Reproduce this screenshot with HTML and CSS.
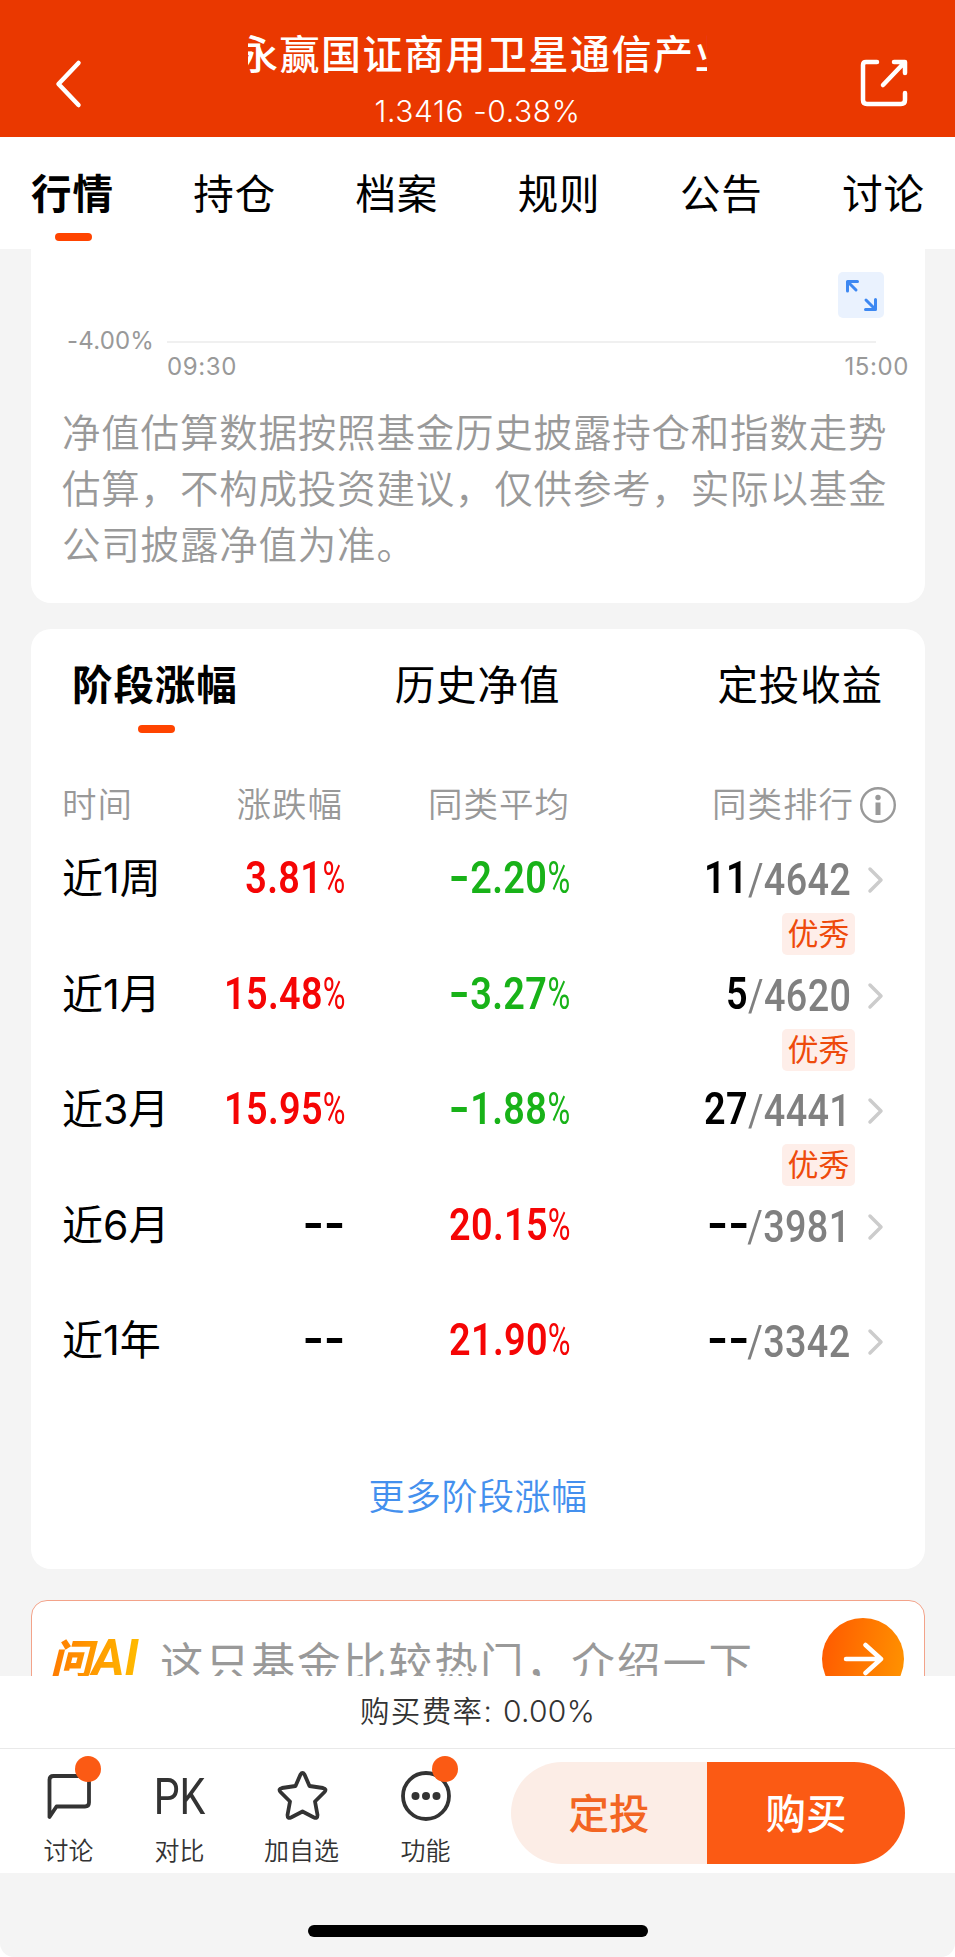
FILE: index.html
```html
<!DOCTYPE html>
<html lang="zh-CN">

<head>
    <meta charset="UTF-8">
    <meta name="viewport" content="width=device-width, initial-scale=1.0">
    <title>永赢国证商用卫星通信产业</title>
    <link rel="stylesheet" href="styles.css">
</head>

<body>
    <header class="header">
        <svg class="back" width="30" height="54" viewBox="0 0 30 54">
            <path d="M25.500 7 L5.500 28 L25.500 49" />
        </svg>
        <div class="fund">
            <h1><span>永赢国证商用卫星通信产业</span></h1>
            <p>1.3416 -0.38%</p>
        </div>
        <svg class="share" width="54" height="54" viewBox="0 0 54 54">
            <path d="M19 6 H8 Q5 6 5 9 V44 Q5 48 9 48 H43 Q47 48 47 44 V37" />
            <path d="M25 29 L46 7 M36 6 H47 V17" />
        </svg>
    </header>

    <nav class="tabs">
        <a class="active">行情</a>
        <a>持仓</a>
        <a>档案</a>
        <a>规则</a>
        <a>公告</a>
        <a>讨论</a>
    </nav>

    <main>
        <section class="card estimate">
            <div class="expand">
                <svg width="46" height="46" viewBox="0 0 46 46">
                    <path d="M9.500 19 V9.500 H19.500 M10 10 L18 18" />
                    <path d="M27.500 37.500 H37.500 V27.500 M28 28 L37 37" />
                </svg>
            </div>
            <div class="axis">
                <span>-4.00%</span>
                <i></i>
            </div>
            <div class="times">
                <span>09:30</span>
                <span>15:00</span>
            </div>
            <p class="notice">净值估算数据按照基金历史披露持仓和指数走势估算，不构成投资建议，仅供参考，实际以基金公司披露净值为准。</p>
        </section>

        <section class="card stage">
            <div class="stage-tabs">
                <a class="active">阶段涨幅</a>
                <a>历史净值</a>
                <a>定投收益</a>
            </div>
            <div class="row head">
                <span>时间</span>
                <span class="change">涨跌幅</span>
                <span class="average">同类平均</span>
                <span class="rank">同类排行<svg width="38" height="38" viewBox="0 0 38 38">
                        <circle cx="19" cy="19" r="16.800" />
                        <path d="M19 16.500 V29" />
                        <circle class="dot" cx="19" cy="11.500" r="2.700" />
                    </svg></span>
            </div>
            <div class="row">
                <span class="period">近<b>1</b>周</span>
                <span class="change num red">3.81<i>%</i></span>
                <span class="average num green"><u></u>2.20<i>%</i></span>
                <span class="rank"><span class="num">11<small><em>/</em>4642</small></span><svg width="20" height="30" viewBox="0 0 20 30"><path d="M5 4 L16 15 L5 26" /></svg></span>
                <span class="tag">优秀</span>
            </div>
            <div class="row">
                <span class="period">近<b>1</b>月</span>
                <span class="change num red">15.48<i>%</i></span>
                <span class="average num green"><u></u>3.27<i>%</i></span>
                <span class="rank"><span class="num">5<small><em>/</em>4620</small></span><svg width="20" height="30" viewBox="0 0 20 30"><path d="M5 4 L16 15 L5 26" /></svg></span>
                <span class="tag">优秀</span>
            </div>
            <div class="row">
                <span class="period">近3月</span>
                <span class="change num red">15.95<i>%</i></span>
                <span class="average num green"><u></u>1.88<i>%</i></span>
                <span class="rank"><span class="num">27<small><em>/</em>4441</small></span><svg width="20" height="30" viewBox="0 0 20 30"><path d="M5 4 L16 15 L5 26" /></svg></span>
                <span class="tag">优秀</span>
            </div>
            <div class="row">
                <span class="period">近6月</span>
                <span class="change num"><u></u><u></u></span>
                <span class="average num red">20.15<i>%</i></span>
                <span class="rank"><span class="num"><u></u><u></u><small><em>/</em>3981</small></span><svg width="20" height="30" viewBox="0 0 20 30"><path d="M5 4 L16 15 L5 26" /></svg></span>
            </div>
            <div class="row">
                <span class="period">近<b>1</b>年</span>
                <span class="change num"><u></u><u></u></span>
                <span class="average num red">21.90<i>%</i></span>
                <span class="rank"><span class="num"><u></u><u></u><small><em>/</em>3342</small></span><svg width="20" height="30" viewBox="0 0 20 30"><path d="M5 4 L16 15 L5 26" /></svg></span>
            </div>
            <a class="more">更多阶段涨幅</a>
        </section>

        <section class="ask">
            <span class="logo">问<b>AI</b></span>
            <span class="question">这只基金比较热门，介绍一下</span>
            <span class="go">
                <svg width="82" height="82" viewBox="0 0 82 82">
                    <path d="M24 41 H59 M43.500 27 L59 41 L43.500 55" />
                </svg>
            </span>
        </section>
    </main>

    <footer>
        <div class="fee">购买费率: <span>0.00%</span></div>
        <div class="bar">
            <a class="item">
                <svg width="56" height="56" viewBox="0 0 56 56">
                    <path d="M8.500 49 V12 Q8.500 8 12.500 8 H44 Q48 8 48 12 V34.500 Q48 38.500 44 38.500 H15.500 Z" />
                </svg>
                <span class="badge"></span>
                讨论
            </a>
            <a class="item">
                <span class="pk">PK</span>
                对比
            </a>
            <a class="item">
                <svg width="56" height="56" viewBox="0 0 56 56">
                    <path d="M26.500 6.500 Q28.500 3.500 30.500 6.500 L35.500 18 L49 20 Q53 21 50.500 24 L41 33.500 L43.500 47 Q43.500 51 40 49.500 L28.500 43.500 L17 49.500 Q13.500 51 13.500 47 L16 33.500 L6.500 24 Q4 21 8 20 L21.500 18 Z" />
                </svg>
                加自选
            </a>
            <a class="item">
                <svg width="56" height="56" viewBox="0 0 56 56">
                    <circle cx="28" cy="28" r="23" />
                    <circle class="dot" cx="17.500" cy="28" r="4" />
                    <circle class="dot" cx="28" cy="28" r="4" />
                    <circle class="dot" cx="38.500" cy="28" r="4" />
                </svg>
                <span class="badge"></span>
                功能
            </a>
            <div class="buttons">
                <button class="plan">定投</button>
                <button class="buy">购买</button>
            </div>
        </div>
    </footer>
    <div class="home"><i></i></div>
</body>

</html>
```

FILE: styles.css
```css
* {
    box-sizing: border-box;
}

body {
    font-family: Inter, "Noto Sans CJK SC", sans-serif;
    margin: 0;
    background-color: #fff;
    color: #000;
    width: 955px;
    height: 1957px;
    display: flex;
    flex-direction: column;
    overflow: hidden;
}

h1,
p {
    margin: 0;
    font-weight: normal;
}

svg {
    display: block;
    flex: none;
    fill: none;
    stroke-linecap: round;
    stroke-linejoin: round;
}

i,
em {
    font-style: normal;
}

/* header */
.header {
    height: 137px;
    flex: none;
    background-color: #ea3800;
    color: #fff;
    display: flex;
    padding-left: 53px;
}

.header svg {
    stroke: #fff;
    stroke-width: 4.5;
    margin-top: 56px;
}

.fund {
    width: 459px;
    margin: 27px 151px 0 165px;
    text-align: center;
}

.fund h1 {
    font-size: 40px;
    line-height: 56px;
    font-weight: 500;
    letter-spacing: 1.5px;
    overflow: hidden;
    display: flex;
    white-space: nowrap;
}

.fund h1 span {
    margin-left: -10px;
}

.fund p {
    font-size: 30px;
    line-height: 40px;
    margin-top: 8px;
    font-weight: 350;
    letter-spacing: 0.6px;
}

/* tabs */
.tabs {
    height: 112px;
    flex: none;
    display: flex;
    justify-content: space-between;
    padding: 0 30px 0 31px;
    font-size: 40.5px;
    line-height: 115px;
    letter-spacing: 0.9px;
}

.tabs a,
.stage-tabs a {
    position: relative;
    font-weight: 400;
}

.tabs .active,
.stage-tabs .active {
    font-weight: 600;
}

.active::after {
    content: "";
    position: absolute;
    left: 50%;
    margin-left: -17px;
    top: 96px;
    width: 37px;
    height: 8px;
    border-radius: 4px;
    background-color: #ff4400;
}

/* cards */
main {
    height: 1427px;
    flex: none;
    background-color: #f4f4f4;
    padding: 0 30px 0 31px;
    overflow: hidden;
}

.card {
    background-color: #fff;
    border-radius: 20px;
}

.estimate {
    height: 354px;
    border-radius: 0 0 20px 20px;
    padding: 23px 16px 0 31px;
    color: #999;
}

.expand {
    width: 46px;
    height: 46px;
    margin-left: 776px;
    border-radius: 5px;
    background-color: #eaf2fe;
}

.expand svg {
    stroke: #3d88f2;
    stroke-width: 3;
}

.axis {
    display: flex;
    align-items: center;
    height: 30px;
    margin-top: 7px;
    font-size: 24px;
    letter-spacing: 0.2px;
}

.axis span {
    width: 105px;
    padding-left: 5px;
}

.axis i {
    width: 709px;
    height: 2px;
    margin-top: 4px;
    background-color: #f0f0f0;
}

.times {
    display: flex;
    justify-content: space-between;
    padding-left: 105px;
    font-size: 24px;
    line-height: 24px;
    letter-spacing: 0.6px;
}

.notice {
    margin-top: 26px;
    width: 828px;
    font-size: 38.5px;
    line-height: 56px;
    letter-spacing: 0.8px;
    font-weight: 350;
}

.stage {
    margin-top: 26px;
    height: 940px;
}

.stage-tabs {
    display: flex;
    justify-content: space-between;
    height: 112px;
    padding: 0 42px 0 41px;
    font-size: 40.5px;
    line-height: 114px;
    letter-spacing: 0.9px;
}

.row {
    display: grid;
    grid-template-columns: 150px 131px 225px 1fr;
    grid-template-rows: 70px 45.6px;
    padding: 0 31px;
    height: 115.6px;
}

.head {
    height: 60px;
    margin-top: 34px;
    grid-template-rows: 60px;
    font-size: 34.5px;
    line-height: 60px;
    letter-spacing: 1px;
    color: #999;
    font-weight: 350;
}

.head + .row {
    margin-top: 8px;
}

.change,
.average {
    justify-self: end;
    margin-right: 0;
}

.head .average {
    margin-right: -2px;
}

.head .rank {
    display: flex;
    justify-content: flex-end;
    align-items: center;
    margin-right: -3px;
}

.head svg {
    margin-left: 5px;
    stroke: #999;
    stroke-width: 2.4;
}

.head path {
    stroke-width: 5;
    stroke-linecap: butt;
}

.head .dot {
    fill: #999;
    stroke: none;
}

.period {
    font-size: 41px;
    line-height: 70px;
    font-weight: 400;
    white-space: nowrap;
}

.period b {
    font-weight: 400;
}

/* narrow figures */
.num {
    font-family: Roboto, sans-serif;
    font-size: 44.5px;
    line-height: 70px;
    font-weight: 600;
    white-space: nowrap;
    letter-spacing: 0.4px;
    transform: scaleX(0.85);
    transform-origin: right;
}

.num i {
    font-weight: 400;
    display: inline-block;
    width: 24px;
    letter-spacing: 0;
    transform: scaleX(0.82);
    transform-origin: left;
}

.num u {
    display: inline-block;
    width: 18px;
    height: 5px;
    margin: 0 1px 12px 6px;
    background-color: currentColor;
    vertical-align: baseline;
}

.green u {
    margin-right: 4px;
}

.num small {
    font-size: 44.5px;
    font-weight: 500;
    color: #808080;
    position: relative;
    top: 2px;
}

.num em {
    font-weight: 400;
}

.red {
    color: #f50505;
}

.green {
    color: #18b218;
}

.row .rank {
    display: flex;
    align-items: center;
    justify-content: flex-end;
}

.row:not(.head) .rank {
    margin-right: 9px;
}

.row:not(.head) .rank svg {
    margin: 4px 0 0 14px;
    stroke: #ccc;
    stroke-width: 3.5;
}

.tag {
    grid-column: 4;
    justify-self: end;
    width: 73px;
    height: 42px;
    margin: 0 39px 0 0;
    border-radius: 5px;
    background-color: #feeee9;
    color: #ee4a0c;
    font-size: 31px;
    line-height: 42px;
    text-align: center;
}

.more {
    display: block;
    margin-top: 46px;
    text-align: center;
    color: #4490ee;
    font-size: 36px;
    line-height: 60px;
    letter-spacing: 0.5px;
    font-weight: 350;
}

/* ask AI */
.ask {
    margin-top: 31px;
    height: 118px;
    border: 1.5px solid #f3a38a;
    border-radius: 16px;
    background-color: #fff;
    display: flex;
    align-items: center;
    padding: 0 20px 0 18px;
}

.logo {
    width: 110px;
    font-size: 42px;
    line-height: 60px;
    font-weight: 900;
    font-style: italic;
    white-space: nowrap;
    background: linear-gradient(90deg, #ff7a00, #ffb800 85px);
    background-clip: text;
    -webkit-background-clip: text;
    color: transparent;
}

.logo b {
    font-family: Roboto, sans-serif;
    font-size: 50px;
    font-weight: 700;
}

.question {
    flex: 1;
    font-size: 43.5px;
    letter-spacing: 2.2px;
    line-height: 60px;
    color: #999;
    white-space: nowrap;
    padding-top: 8px;
}

.go {
    width: 82px;
    height: 82px;
    border-radius: 50%;
    background: linear-gradient(100deg, #ff5800, #ff9500);
}

.go svg {
    stroke: #fff;
    stroke-width: 4.5;
}

/* footer */
footer {
    flex: none;
    height: 197px;
    color: #333;
}

.fee {
    height: 73px;
    border-bottom: 1px solid #e9e9e9;
    text-align: center;
    font-size: 29.5px;
    line-height: 71px;
    letter-spacing: 1.4px;
    font-weight: 350;
}

.fee span {
    font-size: 30px;
    font-weight: 350;
    letter-spacing: 0.3px;
}

.bar {
    display: grid;
    grid-template-columns: 111px 111px 133px 115px 394px;
    padding-left: 13px;
    height: 124px;
}

.item {
    position: relative;
    display: flex;
    flex-direction: column;
    align-items: center;
    padding-top: 19px;
    font-size: 25px;
    line-height: 54px;
    font-weight: 350;
}

.item svg {
    stroke: #333;
    stroke-width: 3.8;
}

.item .dot {
    fill: #333;
    stroke: none;
}

.pk {
    height: 56px;
    font-family: Roboto, sans-serif;
    font-size: 50px;
    line-height: 58px;
    font-weight: 400;
    transform: scaleX(0.82);
}

.badge {
    position: absolute;
    left: 50%;
    margin-left: 6px;
    top: 7px;
    width: 26px;
    height: 26px;
    border-radius: 50%;
    background-color: #fb5a14;
}

.buttons {
    display: flex;
    margin: 13px 0 0 28px;
    height: 102px;
    width: 394px;
    border-radius: 51px;
    overflow: hidden;
}

.buttons button {
    width: 196px;
    border: none;
    padding: 0 0 4px;
    font: 500 40.5px "Noto Sans CJK SC", sans-serif;
    background-color: #fcede6;
    color: #f36522;
}

.buttons .buy {
    width: 198px;
    background-color: #fb5a14;
    color: #fff;
}

.home {
    flex: 1;
    background-color: #f4f4f4;
    border-radius: 0 0 14px 14px;
    padding-top: 52px;
}

.home i {
    display: block;
    width: 340px;
    height: 12px;
    margin: 0 auto;
    border-radius: 6px;
    background-color: #000;
}
```
